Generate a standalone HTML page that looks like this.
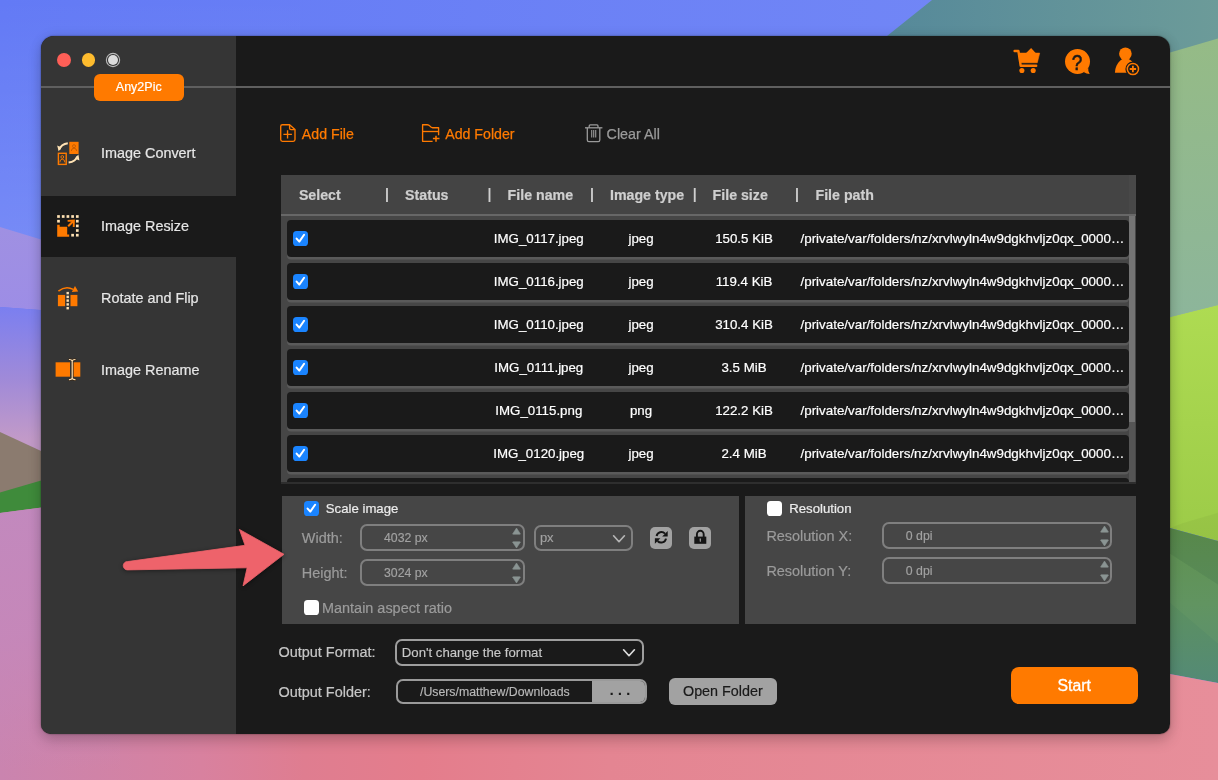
<!DOCTYPE html><html><head><meta charset="utf-8"><title>Any2Pic</title><style>
*{box-sizing:border-box;margin:0;padding:0}
html,body{width:1218px;height:780px;overflow:hidden;background:#6b7ff2}
body{position:relative;font-family:"Liberation Sans",Arial,sans-serif;-webkit-font-smoothing:antialiased}
.abs{position:absolute}
#bg{position:absolute;left:0;top:0;width:1218px;height:780px}
#win{position:absolute;left:41px;top:36px;width:1128.5px;height:697.5px;opacity:.999;border-radius:13px 13px 10px 10px;background:#1a1a1a;overflow:hidden}
#shadow{position:absolute;left:41px;top:36px;width:1128.5px;height:697.5px;border-radius:13px 13px 10px 10px;box-shadow:0 7px 14px 0 rgba(0,0,0,.17),0 0 12px rgba(0,0,0,.10),0 0 1.5px rgba(0,0,0,.6)}
#side{position:absolute;left:0;top:0;width:195px;height:698px;background:#353535}
#side .act{position:absolute;left:0;top:159.5px;width:195px;height:61px;background:#1a1a1a}
.nav,.lbl,.lbl2,.cell,.th{-webkit-text-stroke:0.2px currentColor}
.nav{position:absolute;left:60px;font-size:14.4px;color:#e6e6e6;white-space:nowrap;line-height:20px;height:20px}
#hline{position:absolute;left:0;top:50.4px;width:1128.5px;height:1.2px;background:#5f5f5f}
.tl{position:absolute;top:16.8px;width:13.8px;height:13.8px;border-radius:50%}
#badge{-webkit-text-stroke:0.2px #fff;position:absolute;left:52.5px;top:38px;width:90.5px;height:27px;border-radius:6px;background:#ff7a00;color:#fff;font-size:12.5px;line-height:27px;text-align:center}
.tb{position:absolute;top:87.5px;font-size:14.2px;-webkit-text-stroke:0.25px currentColor;line-height:20px;height:20px;white-space:nowrap}
#tpanel{position:absolute;left:240px;top:139px;width:855px;height:307px;background:#464646;overflow:hidden}
#thead{position:absolute;left:0;top:0;width:855px;height:39.7px;background:#444}
.th{position:absolute;top:10px;font-weight:bold;font-size:14.2px;line-height:20px;color:#cfcfcf;white-space:nowrap}
.sep{position:absolute;top:9px;font-size:14.2px;line-height:20px;color:#cfcfcf;font-weight:bold}
#hl2{position:absolute;left:0;top:39.4px;width:855px;height:2px;background:#676767}
.row{position:absolute;left:6px;width:842px;height:37px;background:#1a1a1a;border-radius:4px;box-shadow:0 2.6px 0 0 #5a5a5a}
.cell{position:absolute;top:9px;font-size:13.3px;line-height:20px;color:#fff;white-space:nowrap}
.ck{position:absolute;width:14.8px;height:14.8px;border-radius:3.6px;background:#1a84ff}
.ck svg{position:absolute;left:0;top:0}
.ckw{position:absolute;width:14.8px;height:14.8px;border-radius:3.6px;background:#fff}
.panel{position:absolute;background:#464646}
.lbl{position:absolute;font-size:14.45px;line-height:20px;color:#9b9b9b;white-space:nowrap}
.lbl2{position:absolute;font-size:13.2px;line-height:20px;color:#ececec;white-space:nowrap}
.inp{-webkit-text-stroke:0.15px currentColor;position:absolute;border:2px solid #7f7f7f;border-radius:7px;height:26.6px;font-size:12.3px;color:#a2a2a2;line-height:22.6px;padding-top:1px;white-space:nowrap}
.btn{position:absolute;background:#a2a2a2;border-radius:5.5px}
</style></head><body>

<svg id="bg" width="1218" height="780" viewBox="0 0 1218 780">
<defs>
<linearGradient id="gblue" x1="0" y1="0" x2="1" y2="0"><stop offset="0" stop-color="#637af5"/><stop offset="0.78" stop-color="#7186f6"/><stop offset="1" stop-color="#7186f6"/></linearGradient>
<linearGradient id="gblue2" x1="0" y1="0" x2="0" y2="1"><stop offset="0" stop-color="#ffffff" stop-opacity="0"/><stop offset="1" stop-color="#ffffff" stop-opacity="0.14"/></linearGradient>
<linearGradient id="gteal" x1="0" y1="0" x2="1" y2="0"><stop offset="0" stop-color="#52869a"/><stop offset="1" stop-color="#6c9b99"/></linearGradient>
<linearGradient id="glav" x1="0" y1="0" x2="0" y2="1"><stop offset="0" stop-color="#9f90e2"/><stop offset="1" stop-color="#9d8de6"/></linearGradient>
<linearGradient id="gviolet" x1="0" y1="0" x2="0" y2="1"><stop offset="0" stop-color="#7b7ff0"/><stop offset="0.34" stop-color="#a08ad8"/><stop offset="0.62" stop-color="#c29ac8"/><stop offset="1" stop-color="#c29ac8"/></linearGradient>
<linearGradient id="gpink" x1="0" y1="0" x2="1" y2="0"><stop offset="0" stop-color="#ca84af"/><stop offset="0.08" stop-color="#d083a7"/><stop offset="0.165" stop-color="#d8819f"/><stop offset="0.25" stop-color="#df7d90"/><stop offset="0.345" stop-color="#e47d8c"/><stop offset="0.5" stop-color="#e48592"/><stop offset="1" stop-color="#e78e9a"/></linearGradient>
<linearGradient id="gpl" gradientUnits="userSpaceOnUse" x1="0" y1="500" x2="0" y2="770"><stop offset="0" stop-color="#c289be" stop-opacity="1"/><stop offset="0.5" stop-color="#c488bc" stop-opacity="0.8"/><stop offset="1" stop-color="#c488bc" stop-opacity="0"/></linearGradient>
<linearGradient id="glg" x1="0" y1="0" x2="0" y2="1"><stop offset="0" stop-color="#95bb86"/><stop offset="1" stop-color="#8cb59c"/></linearGradient>
<linearGradient id="gyg" x1="0" y1="0" x2="0" y2="1"><stop offset="0" stop-color="#aedb52"/><stop offset="1" stop-color="#9ccb48"/></linearGradient>
<linearGradient id="gdg" x1="0" y1="0" x2="0" y2="1"><stop offset="0" stop-color="#5a8c48"/><stop offset="0.55" stop-color="#5c9060"/><stop offset="1" stop-color="#548a76"/></linearGradient>
</defs>
<rect width="1218" height="780" fill="url(#gblue)"/>
<rect width="300" height="270" fill="url(#gblue2)"/>
<!-- teal -->
<polygon points="932,0 1218,0 1218,60 1100,80 829.5,82" fill="url(#gteal)"/>
<!-- right light green -->
<polygon points="1100,73 1218,38.5 1218,305 1100,334.5" fill="url(#glg)"/>
<polygon points="1100,334.5 1218,305 1218,541 1100,509" fill="url(#gyg)"/>
<polygon points="1100,509 1218,541 1218,683 1100,661" fill="url(#gdg)"/>
<polygon points="1100,508.7 1218,584.6 1218,643.6 1100,543" fill="#b8e070" fill-opacity="0.06"/>
<polygon points="1100,509 1218,541 1218,584.6 1100,508.7" fill="#000000" fill-opacity="0.03"/>
<polygon points="1183,523 1218,512.8 1218,541 1170,528 " fill="#000000" fill-opacity="0.035"/>
<!-- left -->
<polygon points="0,227 120,263.6 120,316 0,307" fill="url(#glav)"/>
<polygon points="0,307 120,316 120,520 0,520" fill="url(#gviolet)"/>
<polygon points="0,432 120,487.6 120,520 0,520" fill="#8b7b6f"/>
<polygon points="0,492.4 120,457.6 120,520 0,520" fill="#3f8b3b"/>
<!-- bottom pink -->
<polygon points="0,513 120,497.2 1100,661 1218,683 1218,780 0,780" fill="url(#gpink)"/>
<polygon points="0,513 120,497.2 120,780 0,780" fill="url(#gpl)"/>
</svg>

<div id="shadow"></div>
<div id="win">
<div id="side"><div class="act"></div></div>
<div id="hline"></div>
<div class="tl" style="left:15.90px;background:#fe5f57"></div>
<div class="tl" style="left:40.60px;background:#febc2e"></div>
<div class="tl" style="left:65.20px;background:#dcdcdc;box-shadow:0 0 0 1.1px #353535,0 0 0 2.2px #b9b9b9;width:10.4px;height:10.4px;top:18.6px;left:66.89999999999999px"></div>
<div id="badge">Any2Pic</div>
<div class="nav" style="top:107.00px">Image Convert</div>
<div class="nav" style="top:179.80px">Image Resize</div>
<div class="nav" style="top:251.60px">Rotate and Flip</div>
<div class="nav" style="top:323.60px">Image Rename</div>
<svg class="abs" style="left:15px;top:103.6px" width="26" height="28" viewBox="0 0 26 28">
<rect x="13.3" y="1.8" width="9.3" height="12.2" fill="#ff7a00"/>
<circle cx="18" cy="6.2" r="1.5" fill="none" stroke="#c25a00" stroke-width="0.9"/>
<path d="M15.4 11 Q15.4 8.2 18 8.2 Q20.6 8.2 20.6 11" fill="none" stroke="#c25a00" stroke-width="0.9"/>
<rect x="2.4" y="13.3" width="7.8" height="11.1" fill="none" stroke="#ff7a00" stroke-width="1.4"/>
<circle cx="6.3" cy="17" r="1.4" fill="none" stroke="#ff7a00" stroke-width="0.9"/>
<path d="M3.8 22.4 Q3.8 19.2 6.3 19.2 Q8.8 19.2 8.8 22.4" fill="none" stroke="#ff7a00" stroke-width="0.9"/>
<path d="M11.8 3.2 Q5.2 4 3.2 9.6" fill="none" stroke="#ffe2b4" stroke-width="2"/>
<path d="M1.2 5.6 L5.6 7.6 L2.6 11.2 Z" fill="#ffe2b4"/>
<path d="M12.6 22.6 Q19.6 21.6 21.6 16.4" fill="none" stroke="#ffe2b4" stroke-width="2"/>
<path d="M23.4 20.6 L18.8 18.4 L22.4 14.4 Z" fill="#ffe2b4"/>
</svg>
<svg class="abs" style="left:15px;top:178px" width="26" height="26" viewBox="0 0 26 26">
<rect x="1.15" y="1.15" width="2.7" height="2.7" fill="#ffe2b4"/><rect x="5.85" y="1.15" width="2.7" height="2.7" fill="#ffe2b4"/><rect x="10.55" y="1.15" width="2.7" height="2.7" fill="#ffe2b4"/><rect x="15.25" y="1.15" width="2.7" height="2.7" fill="#ffe2b4"/><rect x="19.95" y="1.15" width="2.7" height="2.7" fill="#ffe2b4"/><rect x="1.15" y="5.85" width="2.7" height="2.7" fill="#ffe2b4"/><rect x="19.95" y="5.85" width="2.7" height="2.7" fill="#ffe2b4"/><rect x="19.95" y="10.55" width="2.7" height="2.7" fill="#ffe2b4"/><rect x="19.95" y="15.15" width="2.7" height="2.7" fill="#ffe2b4"/><rect x="19.95" y="19.85" width="2.7" height="2.7" fill="#ffe2b4"/><rect x="15.25" y="19.85" width="2.7" height="2.7" fill="#ffe2b4"/>
<path d="M1.2 10.7 L3.7 10.7 L3.7 12.7 L11.2 12.7 L11.2 20.4 L13.2 20.4 L13.2 22.7 L1.2 22.7 Z" fill="#ff7a00"/>
<path d="M12.2 12.2 L17.2 7.2" fill="none" stroke="#ff7a00" stroke-width="2"/>
<path d="M11.6 6.9 L17.9 6.5 L17.7 13" fill="none" stroke="#ff7a00" stroke-width="1.9"/>
</svg>
<svg class="abs" style="left:15px;top:250px" width="26" height="26" viewBox="0 0 26 26">
<rect x="1.9" y="8.9" width="7.2" height="11.3" fill="#ff7a00"/>
<rect x="14.5" y="8.9" width="6.9" height="11.3" fill="#ff7a00"/>
<rect x="10.50" y="5.90" width="2.4" height="2.4" fill="#ffe2b4"/><rect x="10.50" y="9.70" width="2.4" height="2.4" fill="#ffe2b4"/><rect x="10.50" y="13.40" width="2.4" height="2.4" fill="#ffe2b4"/><rect x="10.50" y="17.20" width="2.4" height="2.4" fill="#ffe2b4"/><rect x="10.50" y="21.00" width="2.4" height="2.4" fill="#ffe2b4"/>
<path d="M2.4 5.2 Q9.6 -0.6 17.2 3.4" fill="none" stroke="#ff7a00" stroke-width="1.5"/>
<path d="M15.8 6 L22.2 5.6 L19.0 0 Z" fill="#ff7a00"/>
</svg>
<svg class="abs" style="left:14px;top:322px" width="28" height="24" viewBox="0 0 28 24">
<rect x="0.6" y="4.3" width="14.4" height="14.4" fill="#ff7a00"/>
<rect x="18.3" y="4.3" width="7" height="14.4" fill="#ff7a00"/>
<path d="M14.4 1.5 Q16.6 1.5 17.2 2.9 Q17.8 1.5 20 1.5 M17.2 2.9 L17.2 20.3 M14.4 21.7 Q16.6 21.7 17.2 20.3 Q17.8 21.7 20 21.7" fill="none" stroke="#3a2a1a" stroke-width="2.6" stroke-linecap="round"/>
<path d="M14.4 1.5 Q16.6 1.5 17.2 2.9 Q17.8 1.5 20 1.5 M17.2 2.9 L17.2 20.3 M14.4 21.7 Q16.6 21.7 17.2 20.3 Q17.8 21.7 20 21.7" fill="none" stroke="#ffe2b4" stroke-width="1.2" stroke-linecap="round"/>
</svg>
<svg class="abs" style="left:971px;top:10px" width="30" height="30" viewBox="0 0 30 30">
<path d="M2.6 5 L6.4 5 L8.7 19.7 L24.2 19.7" fill="none" stroke="#ff7a00" stroke-width="2.4" stroke-linejoin="round" stroke-linecap="round"/>
<path d="M6.4 7.1 L27.7 7.1 L25.3 16.7 L7.8 16.7 Z" fill="#ff7a00" stroke="#ff7a00" stroke-width="0.6" stroke-linejoin="round"/>
<path d="M14.1 6.9 L19.1 1.9 L23.7 6.9 Z" fill="#ff7a00"/>
<circle cx="9.9" cy="24.5" r="2.55" fill="#ff7a00"/><circle cx="21.2" cy="24.5" r="2.55" fill="#ff7a00"/>
</svg>
<svg class="abs" style="left:1022px;top:10px" width="30" height="31" viewBox="0 0 30 31">
<circle cx="14.5" cy="15.5" r="12.5" fill="#ff7a00"/>
<path d="M20.6 26 Q23.6 28 26.7 28 Q24.9 25.8 25.2 21.8 Z" fill="#ff7a00"/>
<text transform="translate(14.15,24.3) scale(0.86,1)" x="0" y="0" font-family="Liberation Sans,Arial,sans-serif" font-size="22.2" fill="#1a1a1a" stroke="#1a1a1a" stroke-width="0.55" text-anchor="middle">?</text>
</svg>
<svg class="abs" style="left:1072px;top:10px" width="30" height="31" viewBox="0 0 30 31">
<circle cx="12.4" cy="7.8" r="6.3" fill="#ff7a00"/>
<path d="M1.9 26.8 Q2.2 19.4 7 14.8 Q8.8 13.2 10 12.4 L14.8 12.4 Q17.6 13.6 19.2 15.6 L19.8 26.8 Z" fill="#ff7a00"/>
<circle cx="19.9" cy="23" r="7.5" fill="#1a1a1a"/>
<circle cx="19.9" cy="23" r="5.6" fill="none" stroke="#ff7a00" stroke-width="1.5"/>
<path d="M16.7 23 L23.1 23 M19.9 19.8 L19.9 26.2" stroke="#ff7a00" stroke-width="1.8"/>
</svg>
<svg class="abs" style="left:237px;top:86px" width="20" height="22" viewBox="0 0 20 22">
<path d="M4.4 2.7 L11.6 2.7 L17 7.6 L17 17.6 Q17 19.4 15.2 19.4 L4.4 19.4 Q2.7 19.4 2.7 17.6 L2.7 4.4 Q2.7 2.7 4.4 2.7 Z" fill="none" stroke="#ff7a00" stroke-width="1.35" stroke-linejoin="round"/>
<path d="M11.6 2.9 L11.6 6.2 Q11.6 7.6 13 7.6 L16.8 7.6" fill="none" stroke="#ff7a00" stroke-width="1.35"/>
<path d="M5.4 12.3 L13.9 12.3 M9.55 8.3 L9.55 16.4" stroke="#ff7a00" stroke-width="1.35"/>
</svg>
<div class="tb" style="left:260.8px;color:#ff7a00">Add File</div>
<svg class="abs" style="left:379px;top:86px" width="22" height="22" viewBox="0 0 22 22">
<path d="M12.6 19.3 L2.6 19.3 L2.6 2.7 L7.2 2.7 Q8.8 2.7 10 4.2 Q11 5.7 12.6 5.7 L18.6 5.7 L18.6 13.2" fill="none" stroke="#ff7a00" stroke-width="1.35" stroke-linejoin="round"/>
<path d="M2.6 9.5 L18.6 9.5" stroke="#ff7a00" stroke-width="1.35"/>
<path d="M12.9 16.6 L19.5 16.6 M16 13.7 L16 19.8" stroke="#ff7a00" stroke-width="1.5"/>
</svg>
<div class="tb" style="left:404.2px;color:#ff7a00">Add Folder</div>
<svg class="abs" style="left:542px;top:86px" width="22" height="22" viewBox="0 0 22 22">
<path d="M2 5.8 L19.4 5.8" stroke="#9a9a9a" stroke-width="1.3"/>
<path d="M6.2 5.8 L6.2 3.9 Q6.2 2.8 7.3 2.8 L14 2.8 Q15 2.8 15 3.9 L15 5.8" fill="none" stroke="#9a9a9a" stroke-width="1.3"/>
<path d="M4.3 5.8 L4.3 18 Q4.3 19.6 5.9 19.6 L15.2 19.6 Q16.8 19.6 16.8 18 L16.8 5.8" fill="none" stroke="#9a9a9a" stroke-width="1.3"/>
<path d="M8.7 8 L8.7 15.6 M10.7 8 L10.7 15.6 M12.7 8 L12.7 15.6" stroke="#9a9a9a" stroke-width="1.1"/>
</svg>
<div class="tb" style="left:565.6px;color:#9a9a9a;font-size:14.3px">Clear All</div>
<div id="tpanel"><div id="thead"><div class="abs" style="left:848px;top:0;width:7px;height:39.4px;background:#484848"></div></div><div id="hl2"></div>
<div class="th" style="left:17.9px">Select</div>
<div class="th" style="left:124.1px">Status</div>
<div class="th" style="left:226.6px">File name</div>
<div class="th" style="left:329px">Image type</div>
<div class="th" style="left:431.6px">File size</div>
<div class="th" style="left:534.5px">File path</div>
<div class="sep" style="left:104.00px">|</div>
<div class="sep" style="left:206.40px">|</div>
<div class="sep" style="left:309.00px">|</div>
<div class="sep" style="left:411.70px">|</div>
<div class="sep" style="left:514.10px">|</div>
<div class="row" style="top:44.80px"><div class="ck" style="left:6.3px;top:11.2px"><svg width="14.6" height="14.6" viewBox="0 0 14.6 14.6"><path d="M3.6 7.6 L6.3 10.6 L11.1 3.7" fill="none" stroke="#fff" stroke-width="2" stroke-linecap="round" stroke-linejoin="round"/></svg></div><div class="cell" style="left:251.8px;transform:translateX(-50%)">IMG_0117.jpeg</div><div class="cell" style="left:354.0px;transform:translateX(-50%)">jpeg</div><div class="cell" style="left:457.0px;transform:translateX(-50%)">150.5 KiB</div><div class="cell" style="left:513.5px;font-size:13.37px">/private/var/folders/nz/xrvlwyln4w9dgkhvljz0qx_0000…</div></div>
<div class="row" style="top:87.90px"><div class="ck" style="left:6.3px;top:11.2px"><svg width="14.6" height="14.6" viewBox="0 0 14.6 14.6"><path d="M3.6 7.6 L6.3 10.6 L11.1 3.7" fill="none" stroke="#fff" stroke-width="2" stroke-linecap="round" stroke-linejoin="round"/></svg></div><div class="cell" style="left:251.8px;transform:translateX(-50%)">IMG_0116.jpeg</div><div class="cell" style="left:354.0px;transform:translateX(-50%)">jpeg</div><div class="cell" style="left:457.0px;transform:translateX(-50%)">119.4 KiB</div><div class="cell" style="left:513.5px;font-size:13.37px">/private/var/folders/nz/xrvlwyln4w9dgkhvljz0qx_0000…</div></div>
<div class="row" style="top:131.00px"><div class="ck" style="left:6.3px;top:11.2px"><svg width="14.6" height="14.6" viewBox="0 0 14.6 14.6"><path d="M3.6 7.6 L6.3 10.6 L11.1 3.7" fill="none" stroke="#fff" stroke-width="2" stroke-linecap="round" stroke-linejoin="round"/></svg></div><div class="cell" style="left:251.8px;transform:translateX(-50%)">IMG_0110.jpeg</div><div class="cell" style="left:354.0px;transform:translateX(-50%)">jpeg</div><div class="cell" style="left:457.0px;transform:translateX(-50%)">310.4 KiB</div><div class="cell" style="left:513.5px;font-size:13.37px">/private/var/folders/nz/xrvlwyln4w9dgkhvljz0qx_0000…</div></div>
<div class="row" style="top:174.10px"><div class="ck" style="left:6.3px;top:11.2px"><svg width="14.6" height="14.6" viewBox="0 0 14.6 14.6"><path d="M3.6 7.6 L6.3 10.6 L11.1 3.7" fill="none" stroke="#fff" stroke-width="2" stroke-linecap="round" stroke-linejoin="round"/></svg></div><div class="cell" style="left:251.8px;transform:translateX(-50%)">IMG_0111.jpeg</div><div class="cell" style="left:354.0px;transform:translateX(-50%)">jpeg</div><div class="cell" style="left:457.0px;transform:translateX(-50%)">3.5 MiB</div><div class="cell" style="left:513.5px;font-size:13.37px">/private/var/folders/nz/xrvlwyln4w9dgkhvljz0qx_0000…</div></div>
<div class="row" style="top:217.20px"><div class="ck" style="left:6.3px;top:11.2px"><svg width="14.6" height="14.6" viewBox="0 0 14.6 14.6"><path d="M3.6 7.6 L6.3 10.6 L11.1 3.7" fill="none" stroke="#fff" stroke-width="2" stroke-linecap="round" stroke-linejoin="round"/></svg></div><div class="cell" style="left:251.8px;transform:translateX(-50%)">IMG_0115.png</div><div class="cell" style="left:354.0px;transform:translateX(-50%)">png</div><div class="cell" style="left:457.0px;transform:translateX(-50%)">122.2 KiB</div><div class="cell" style="left:513.5px;font-size:13.37px">/private/var/folders/nz/xrvlwyln4w9dgkhvljz0qx_0000…</div></div>
<div class="row" style="top:260.30px"><div class="ck" style="left:6.3px;top:11.2px"><svg width="14.6" height="14.6" viewBox="0 0 14.6 14.6"><path d="M3.6 7.6 L6.3 10.6 L11.1 3.7" fill="none" stroke="#fff" stroke-width="2" stroke-linecap="round" stroke-linejoin="round"/></svg></div><div class="cell" style="left:251.8px;transform:translateX(-50%)">IMG_0120.jpeg</div><div class="cell" style="left:354.0px;transform:translateX(-50%)">jpeg</div><div class="cell" style="left:457.0px;transform:translateX(-50%)">2.4 MiB</div><div class="cell" style="left:513.5px;font-size:13.37px">/private/var/folders/nz/xrvlwyln4w9dgkhvljz0qx_0000…</div></div>
<div class="row" style="top:303.40px"></div>
<div class="abs" style="left:848.3px;top:41px;width:5.8px;height:266.5px;background:#555"></div>
<div class="abs" style="left:848.3px;top:41px;width:5.8px;height:206px;background:#747474"></div>
</div>
<div class="abs" style="left:240px;top:446px;width:855px;height:2px;background:#2e2e2e"></div>
<div class="panel" style="left:240.5px;top:459.8px;width:457.3px;height:128px"></div>
<div class="panel" style="left:704px;top:459.8px;width:391px;height:128px"></div>
<div class="ck" style="left:263px;top:464.9px"><svg width="14.6" height="14.6" viewBox="0 0 14.6 14.6"><path d="M3.6 7.6 L6.3 10.6 L11.1 3.7" fill="none" stroke="#fff" stroke-width="2" stroke-linecap="round" stroke-linejoin="round"/></svg></div>
<div class="lbl2" style="left:284.8px;top:463.10px">Scale image</div>
<div class="lbl" style="left:260.8px;top:491.90px">Width:</div>
<div class="lbl" style="left:260.8px;top:526.80px">Height:</div>
<div class="inp" style="left:319px;top:488.4px;width:164.5px;padding-left:22px">4032 px</div>
<div class="inp" style="left:319px;top:523.3px;width:164.5px;padding-left:22px">3024 px</div>
<svg class="abs" style="left:470.6px;top:491.2px" width="9" height="22" viewBox="0 0 9 22"><path d="M4.5 1 L8.3 6.7 Q8.5 7.3 7.8 7.3 L1.2 7.3 Q0.5 7.3 0.7 6.7 Z" fill="#8a9493" stroke="#8a9493" stroke-width="0.5" stroke-linejoin="round"/><path d="M4.5 21 L8.3 15.3 Q8.5 14.7 7.8 14.7 L1.2 14.7 Q0.5 14.7 0.7 15.3 Z" fill="#8a9493" stroke="#8a9493" stroke-width="0.5" stroke-linejoin="round"/></svg>
<svg class="abs" style="left:470.6px;top:526.1px" width="9" height="22" viewBox="0 0 9 22"><path d="M4.5 1 L8.3 6.7 Q8.5 7.3 7.8 7.3 L1.2 7.3 Q0.5 7.3 0.7 6.7 Z" fill="#8a9493" stroke="#8a9493" stroke-width="0.5" stroke-linejoin="round"/><path d="M4.5 21 L8.3 15.3 Q8.5 14.7 7.8 14.7 L1.2 14.7 Q0.5 14.7 0.7 15.3 Z" fill="#8a9493" stroke="#8a9493" stroke-width="0.5" stroke-linejoin="round"/></svg>
<div class="inp" style="left:493.3px;top:488.8px;width:98.8px;height:26.2px;padding-left:3.6px;padding-top:0;font-size:13px">px</div>
<svg class="abs" style="left:570px;top:497px" width="16" height="12" viewBox="0 0 16 12"><path d="M2.6 2.8 L8 8.7 L13.4 2.8" fill="none" stroke="#b5b5b5" stroke-width="1.7" stroke-linecap="round" stroke-linejoin="round"/></svg>
<div class="btn" style="left:608.5px;top:490.5px;width:22.6px;height:22.5px;border-radius:5px"></div>
<div class="btn" style="left:647.5px;top:490.5px;width:22.6px;height:22.5px;border-radius:5px"></div>
<svg class="abs" style="left:608.5px;top:490.3px" width="22.6" height="22.6" viewBox="0 0 22.6 22.6">
<path d="M6.6 10 A4.9 4.9 0 0 1 15 7.6" fill="none" stroke="#151515" stroke-width="2"/>
<path d="M17.7 4.9 L17.7 10.4 L12.2 10.4 Z" fill="#151515"/>
<path d="M16 12.6 A4.9 4.9 0 0 1 7.6 15" fill="none" stroke="#151515" stroke-width="2"/>
<path d="M4.9 17.7 L4.9 12.2 L10.4 12.2 Z" fill="#151515"/>
</svg>
<svg class="abs" style="left:647.5px;top:490.3px" width="22.6" height="22.6" viewBox="0 0 22.6 22.6">
<path d="M7.9 11 L7.9 8.4 A3.4 3.6 0 0 1 14.7 8.4 L14.7 11" fill="none" stroke="#151515" stroke-width="1.9"/>
<rect x="5.3" y="10.6" width="12" height="7.2" fill="#151515"/>
<path d="M10.6 12.6 L12 12.6 L11.8 15.8 L10.8 15.8 Z" fill="#a2a2a2"/>
</svg>
<div class="ckw" style="left:263px;top:564.4px"></div>
<div class="lbl" style="left:281px;top:561.50px">Mantain aspect ratio</div>
<div class="ckw" style="left:726.4px;top:464.9px"></div>
<div class="lbl2" style="left:748.2px;top:463.10px">Resolution</div>
<div class="lbl" style="left:725.4px;top:490.30px">Resolution X:</div>
<div class="lbl" style="left:725.4px;top:525.30px">Resolution Y:</div>
<div class="inp" style="left:841.2px;top:486.4px;width:230px;padding-left:21.6px">0 dpi</div>
<div class="inp" style="left:841.2px;top:521.3px;width:230px;padding-left:21.6px">0 dpi</div>
<svg class="abs" style="left:1058.6px;top:488.9px" width="9" height="22" viewBox="0 0 9 22"><path d="M4.5 1 L8.3 6.7 Q8.5 7.3 7.8 7.3 L1.2 7.3 Q0.5 7.3 0.7 6.7 Z" fill="#8a9493" stroke="#8a9493" stroke-width="0.5" stroke-linejoin="round"/><path d="M4.5 21 L8.3 15.3 Q8.5 14.7 7.8 14.7 L1.2 14.7 Q0.5 14.7 0.7 15.3 Z" fill="#8a9493" stroke="#8a9493" stroke-width="0.5" stroke-linejoin="round"/></svg>
<svg class="abs" style="left:1058.6px;top:523.8px" width="9" height="22" viewBox="0 0 9 22"><path d="M4.5 1 L8.3 6.7 Q8.5 7.3 7.8 7.3 L1.2 7.3 Q0.5 7.3 0.7 6.7 Z" fill="#8a9493" stroke="#8a9493" stroke-width="0.5" stroke-linejoin="round"/><path d="M4.5 21 L8.3 15.3 Q8.5 14.7 7.8 14.7 L1.2 14.7 Q0.5 14.7 0.7 15.3 Z" fill="#8a9493" stroke="#8a9493" stroke-width="0.5" stroke-linejoin="round"/></svg>
<div class="lbl" style="left:237.5px;top:605.60px;color:#c6c6c6">Output Format:</div>
<div class="lbl" style="left:237.5px;top:646.00px;color:#c6c6c6">Output Folder:</div>
<div class="inp" style="left:354.2px;top:603.4px;width:248.5px;height:26.3px;padding-left:4.6px;font-size:13.2px;color:#c8c8c8;border-color:#9e9e9e;padding-top:1px">Don't change the format</div>
<svg class="abs" style="left:580px;top:611.4px" width="16" height="12" viewBox="0 0 16 12"><path d="M2.6 2.8 L8 8.7 L13.4 2.8" fill="none" stroke="#dcdcdc" stroke-width="1.7" stroke-linecap="round" stroke-linejoin="round"/></svg>
<div class="inp" style="left:355.4px;top:642.6px;width:250.6px;height:25.9px;padding-left:21.6px;padding-top:0;font-size:12.3px;color:#b9b9b9;border-color:#9a9a9a;overflow:hidden">/Users/matthew/Downloads<div class="abs" style="left:193.6px;top:-2px;width:56px;height:26px;background:#a2a2a2;color:#1a1a1a;font-size:14px;font-weight:bold;text-align:center;letter-spacing:4.3px;line-height:22px;padding-left:4.3px">...</div></div>
<div class="btn" style="left:628px;top:642.3px;width:107.7px;height:26.5px;border-radius:6px;color:#1a1a1a;font-size:14.35px;line-height:26.5px;text-align:center;-webkit-text-stroke:0.2px #1a1a1a">Open Folder</div>
<div class="abs" style="left:969.5px;top:630.5px;width:127.5px;height:37.7px;border-radius:8px;background:#ff7a00;color:#fff;font-size:15.8px;line-height:37.7px;text-align:center;-webkit-text-stroke:0.3px #fff">Start</div>
</div>
<svg class="abs" style="left:110px;top:515px;filter:drop-shadow(0 1px 2px rgba(0,0,0,.45))" width="190" height="85" viewBox="110 515 190 85">
<path d="M127.4 561.6 L245 545.3 L239.4 529.4 L284 554.3 L243 585.9 L247.1 567.8 L127.4 569.9 A4.15 4.15 0 0 1 127.4 561.6 Z" fill="#ee636b" stroke="#ee636b" stroke-width="0.8" stroke-linejoin="round"/>
</svg>
</body></html>
